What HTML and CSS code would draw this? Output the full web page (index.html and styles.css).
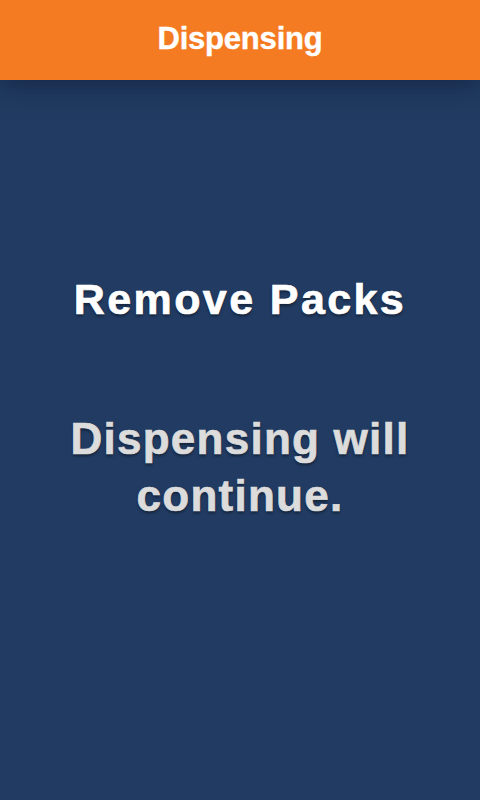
FILE: index.html
```html
<!DOCTYPE html>
<html>
<head>
<meta charset="utf-8">
<link rel="stylesheet" href="styles.css">
</head>
<body>
<div class="screen">
  <header class="topbar"><span class="topbar-title">Dispensing</span></header>
  <main class="content">
    <h1 class="title">Remove Packs</h1>
    <p class="message">Dispensing will<br>continue.</p>
  </main>
</div>
</body>
</html>
```
FILE: styles.css
```css
html, body {
  margin: 0;
  padding: 0;
  height: 100%;
}
body {
  background: #213b62;
  font-family: "Liberation Sans", Arial, sans-serif;
}
.screen {
  width: 480px;
  height: 800px;
  display: flex;
  flex-direction: column;
  background: #213b62;
  overflow: hidden;
}
.topbar {
  height: 80px;
  flex: 0 0 80px;
  background: #f57b22;
  display: flex;
  align-items: center;
  justify-content: center;
  position: relative;
  z-index: 1;
  box-shadow: 0 4px 30px rgba(10, 20, 40, 0.5);
}
.topbar-title {
  color: #ffffff;
  font-weight: bold;
  font-size: 31px;
  letter-spacing: -0.2px;
  line-height: 1;
  margin-top: -4px;
  -webkit-text-stroke: 0.4px #ffffff;
}
.content {
  flex: 1;
  display: flex;
  flex-direction: column;
  align-items: center;
  padding-top: 194px;
  text-align: center;
}
.title {
  margin: 0;
  color: #ffffff;
  font-size: 43px;
  line-height: 50px;
  font-weight: bold;
  letter-spacing: 2.4px;
  -webkit-text-stroke: 0.7px #ffffff;
  text-shadow: 0 2px 3px rgba(0, 0, 0, 0.45);
}
.message {
  margin: 86px 0 0;
  color: #dcdcdc;
  font-size: 44px;
  line-height: 57px;
  font-weight: bold;
  letter-spacing: 1.25px;
  -webkit-text-stroke: 0.7px #dcdcdc;
  text-shadow: 0 2px 3px rgba(0, 0, 0, 0.45);
}
```
